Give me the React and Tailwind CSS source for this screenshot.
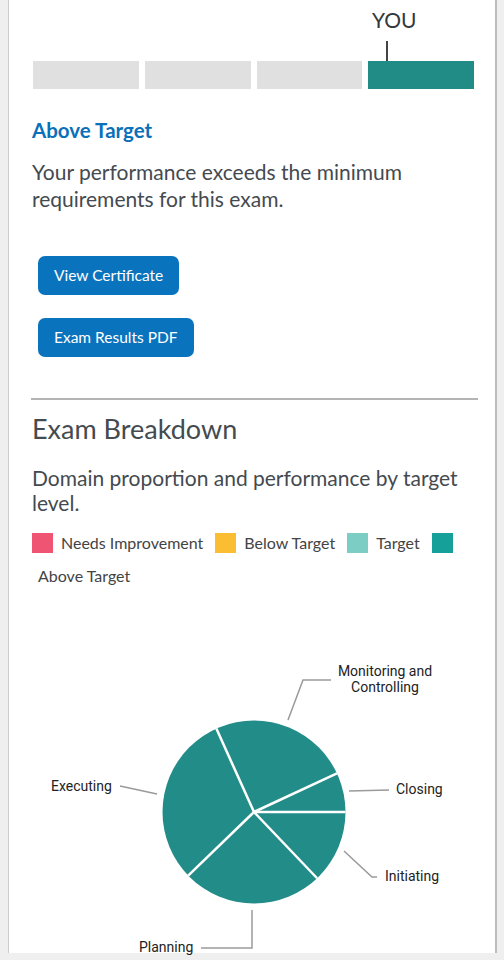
import React from "react";

const cx = 255;
const cy = 812;
const r = 91.5;

// clockwise slice boundaries, degrees from 3 o'clock
const boundaries = [0, 46.4, 136, 245.7, 335];

const point = (deg) => {
  const a = (deg * Math.PI) / 180;
  return [cx + r * Math.cos(a), cy + r * Math.sin(a)];
};

const PieChart = () => (
  <svg
    width="486"
    height="353"
    viewBox="10 600 486 353"
    className="block mt-[14px] overflow-visible"
    style={{ fontFamily: "Roboto, 'Liberation Sans', sans-serif" }}
  >
    <circle cx={cx} cy={cy} r={r} fill="#228c89" />
    {boundaries.map((b) => {
      const [x, y] = point(b);
      return <line key={b} x1={cx} y1={cy} x2={x} y2={y} stroke="#fff" strokeWidth="2.5" />;
    })}

    <g stroke="#9a9a9a" strokeWidth="1.5" fill="none">
      <polyline points="289,720 304,680 332,680" />
      <polyline points="350,791 390,790" />
      <polyline points="345,851 373,877 378,877" />
      <polyline points="121,786 158,794" />
      <polyline points="253,910 253,948 202,948" />
    </g>

    <g fill="#222" fontSize="14">
      <text x="386" y="676" textAnchor="middle">Monitoring and</text>
      <text x="386" y="692" textAnchor="middle">Controlling</text>
      <text x="397" y="794">Closing</text>
      <text x="386" y="881">Initiating</text>
      <text x="52" y="791">Executing</text>
      <text x="140" y="952">Planning</text>
    </g>
  </svg>
);

const Legend = () => (
  <div className="mt-[18px] text-[16px] text-[#444]">
    <div className="flex items-center h-[20px]">
      <span className="w-[21px] h-[20px] bg-[#ef5573]" />
      <span className="ml-[8px]">Needs Improvement</span>
      <span className="ml-[12px] w-[21px] h-[20px] bg-[#fbbd32]" />
      <span className="ml-[8px]">Below Target</span>
      <span className="ml-[12px] w-[21px] h-[20px] bg-[#7ccdc4]" />
      <span className="ml-[8px]">Target</span>
      <span className="ml-[12px] w-[21px] h-[20px] bg-[#16a09a]" />
    </div>
    <div className="pl-[6px] mt-[13px] leading-[20px]">Above Target</div>
  </div>
);

const App = () => {
  return (
    <div className="w-full h-[960px] bg-[#efefef] overflow-hidden" style={{ fontFamily: "Lato, 'Open Sans', sans-serif" }}>
      <div className="ml-[8px] w-[489px] h-[953px] bg-white border-l border-[#cccccc] border-r-2 border-r-[#bdbdbd]">
        <div className="pl-[23px] pr-[20px]">
          {/* YOUR SCORE BAR */}
          <div className="pt-[8px] pl-[1px]">
            <div className="h-[24px] relative">
              <span className="absolute left-[339px] top-0 text-[21px] leading-[24px] text-[#33383d]">YOU</span>
            </div>
            <div className="h-[29px] pt-[9px]">
              <div className="ml-[353px] w-[2px] h-[20px] bg-[#444]" />
            </div>
            <div className="flex gap-[6px] w-[441px]">
              <div className="flex-1 h-[28px] bg-[#e0e0e0]" />
              <div className="flex-1 h-[28px] bg-[#e0e0e0]" />
              <div className="flex-1 h-[28px] bg-[#e0e0e0]" />
              <div className="flex-1 h-[28px] bg-[#218b86]" />
            </div>
          </div>

          <h2 className="mt-[28px] text-[20.5px] leading-[26px] font-bold text-[#0a70b8]">Above Target</h2>
          <p className="mt-[15px] text-[21px] leading-[27px] text-[#444a4f]">
            Your performance exceeds the minimum requirements for this exam.
          </p>

          {/* BUTTONS */}
          <div className="mt-[44px] pl-[6px] flex flex-col items-start gap-[23px]">
            <button className="h-[39px] px-[16px] rounded-[7px] bg-[#0a73bd] text-white text-[15.5px]">
              View Certificate
            </button>
            <button className="h-[39px] px-[16px] rounded-[7px] bg-[#0a73bd] text-white text-[15.5px]">
              Exam Results PDF
            </button>
          </div>

          <hr className="mt-[41px] border-0 h-[2px] bg-[#b4b4b4] w-[447px] -ml-[1px]" />

          <h2 className="mt-[12px] text-[27px] leading-[34px] text-[#444b50]">Exam Breakdown</h2>
          <p className="mt-[19px] text-[21px] leading-[25px] text-[#444a4f] pr-[10px]">
            Domain proportion and performance by target level.
          </p>

          <Legend />
        </div>

        <PieChart />
      </div>
    </div>
  );
};

export default App;
